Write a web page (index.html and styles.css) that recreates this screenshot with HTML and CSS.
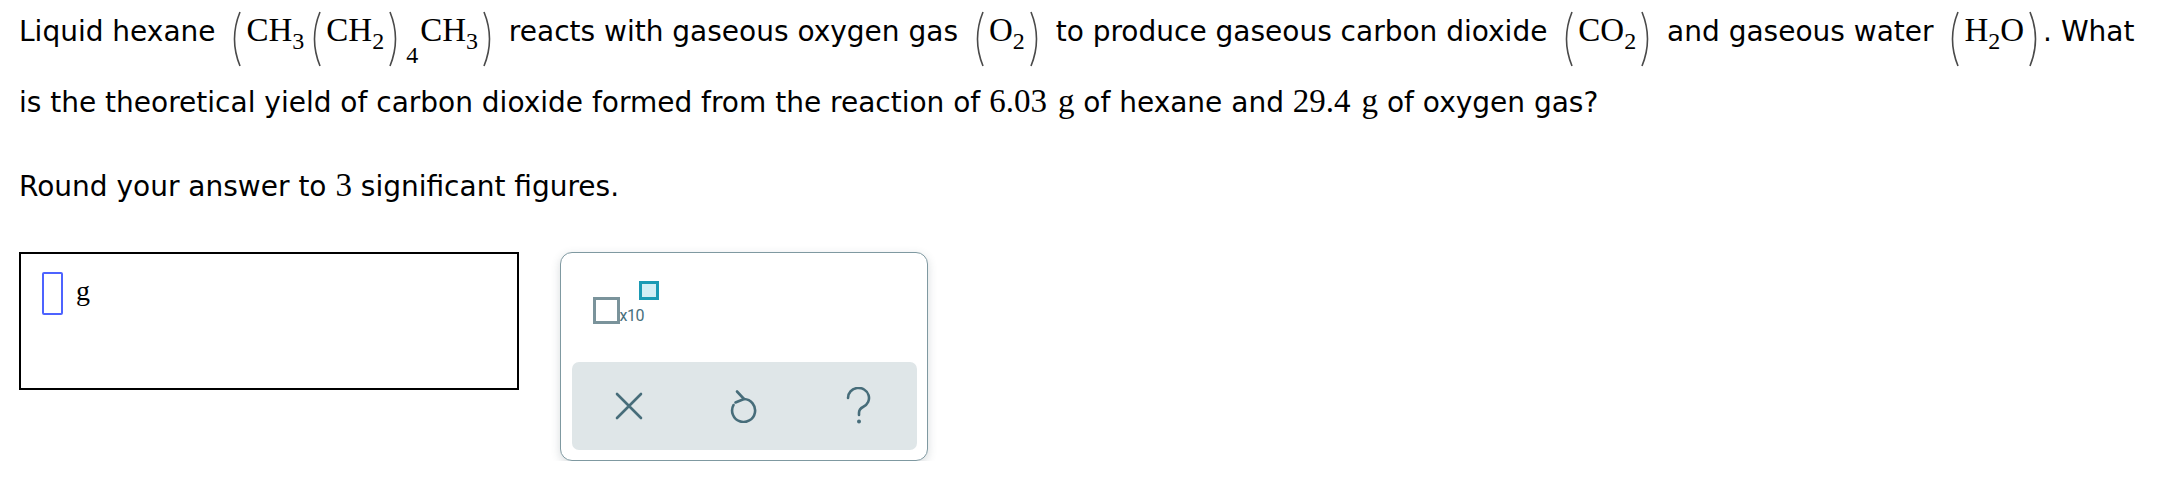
FILE: index.html
```html
<!DOCTYPE html>
<html>
<head>
<meta charset="utf-8">
<link rel="stylesheet" href="styles.css">
</head>
<body>
<div class="page">
  <p class="question">Liquid hexane <span class="math"><svg class="paren" width="16" height="56" viewBox="0 0 16 56"><path d="M13 1 Q2 28 13 55"/></svg>CH<sub>3</sub><svg class="paren" width="16" height="56" viewBox="0 0 16 56"><path d="M13 1 Q2 28 13 55"/></svg>CH<sub>2</sub><svg class="paren" width="16" height="56" viewBox="0 0 16 56"><path d="M3 1 Q14 28 3 55"/></svg><sub class="low">4</sub>CH<sub>3</sub><svg class="paren" width="16" height="56" viewBox="0 0 16 56"><path d="M3 1 Q14 28 3 55"/></svg></span> reacts with gaseous oxygen gas <span class="math"><svg class="paren" width="16" height="56" viewBox="0 0 16 56"><path d="M13 1 Q2 28 13 55"/></svg>O<sub>2</sub><svg class="paren" width="16" height="56" viewBox="0 0 16 56"><path d="M3 1 Q14 28 3 55"/></svg></span> to produce gaseous carbon dioxide <span class="math"><svg class="paren" width="16" height="56" viewBox="0 0 16 56"><path d="M13 1 Q2 28 13 55"/></svg>CO<sub>2</sub><svg class="paren" width="16" height="56" viewBox="0 0 16 56"><path d="M3 1 Q14 28 3 55"/></svg></span> and gaseous water <span class="math"><svg class="paren" width="16" height="56" viewBox="0 0 16 56"><path d="M13 1 Q2 28 13 55"/></svg>H<sub>2</sub>O<svg class="paren paren-end" width="16" height="56" viewBox="0 0 16 56"><path d="M3 1 Q14 28 3 55"/></svg></span>. What is the theoretical yield of carbon dioxide formed from the reaction of <span class="num">6.03<span class="unit-g">g</span></span> of hexane and <span class="num">29.4<span class="unit-g">g</span></span> of oxygen gas?</p>
  <p class="round">Round your answer to <span class="num">3</span> significant figures.</p>

  <div class="answer-row">
    <div class="answer-box">
      <span class="cursor"></span><span class="unit">g</span>
    </div>
    <div class="panel">
      <div class="panel-top">
        <div class="sci">
          <span class="sci-box"></span><span class="sci-text">x10</span><span class="sci-exp"></span>
        </div>
      </div>
      <div class="panel-bar">
        <span class="btn">
          <svg width="28" height="28" viewBox="0 0 28 28"><path d="M2 2 L26 26 M26 2 L2 26"/></svg>
        </span>
        <span class="btn">
          <svg width="28" height="34" viewBox="0 0 28 34"><path d="M14 10 A11.5 11.5 0 1 1 3.5 16"/><path d="M7 2.5 L14 10 L5.5 13.5"/></svg>
        </span>
        <span class="btn">
          <svg width="26" height="38" viewBox="0 0 26 38"><path d="M2 11 A10.5 10 0 1 1 17 20 Q13 22 13 26 L13 28"/><circle class="dot" cx="13" cy="34.5" r="2"/></svg>
        </span>
      </div>
    </div>
  </div>
</div>
</body>
</html>
```

FILE: styles.css
```css
html, body {
  margin: 0;
  padding: 0;
  background: #ffffff;
}

.page {
  padding: 0 4px 0 19px;
  font-family: "DejaVu Sans", Verdana, sans-serif;
  font-size: 28px;
  color: #000;
}

.question {
  margin: -4px 0 0 0;
  line-height: 69px;
}

.math {
  font-family: "Liberation Serif", "Times New Roman", serif;
  font-size: 33px;
  white-space: nowrap;
}

.math sub {
  font-size: 24px;
  vertical-align: -8px;
  line-height: 0;
}

.math sub.low {
  font-size: 24px;
  vertical-align: -22px;
  margin-right: 2px;
}

.paren {
  vertical-align: -26px;
  margin: 0 3px;
}

.paren-end {
  margin-right: 0;
}

.paren path {
  fill: none;
  stroke: #4a4a4a;
  stroke-width: 1.6;
}

.num {
  font-family: "Liberation Serif", "Times New Roman", serif;
  font-size: 33px;
}

.unit-g {
  margin-left: 11px;
}

.round {
  margin: 28px 0 0 0;
  line-height: 40px;
}

.answer-row {
  display: flex;
  align-items: flex-start;
  gap: 41px;
  margin-top: 45px;
}

.answer-box {
  box-sizing: border-box;
  width: 500px;
  height: 138px;
  border: 2px solid #000;
  padding: 18px 0 0 21px;
  display: flex;
  align-items: flex-start;
}

.cursor {
  box-sizing: border-box;
  width: 21px;
  height: 43px;
  border: 2px solid #4d63ff;
  border-radius: 2px;
}

.unit {
  font-family: "Liberation Serif", "Times New Roman", serif;
  font-size: 28px;
  margin-left: 13px;
  margin-top: 3px;
}

.panel {
  box-sizing: border-box;
  width: 368px;
  height: 209px;
  border: 1.5px solid #7f99a1;
  border-radius: 12px;
  padding: 0 10.5px 10px;
  display: flex;
  flex-direction: column;
  box-shadow: 0 3px 10px rgba(60, 80, 90, 0.2);
  background: #fff;
}

.panel-top {
  height: 108.5px;
}

.sci {
  display: flex;
  align-items: flex-end;
  margin: 28px 0 0 21px;
}

.sci-box {
  box-sizing: border-box;
  width: 27px;
  height: 27px;
  border: 3px solid #7a939b;
  margin-bottom: 11px;
}

.sci-text {
  font-family: Roboto, "Open Sans", sans-serif;
  font-size: 16px;
  color: #48707c;
  line-height: 16px;
  margin-bottom: 11px;
  letter-spacing: -0.5px;
}

.sci-exp {
  box-sizing: border-box;
  width: 20px;
  height: 19px;
  border: 3px solid #1b9ab4;
  background: #d3eef5;
  margin-bottom: 35px;
  margin-left: -5px;
}

.panel-bar {
  height: 88px;
  background: #dfe6e8;
  border-radius: 7px;
  display: grid;
  grid-template-columns: 1fr 1fr 1fr;
  align-items: center;
  justify-items: center;
}

.btn {
  display: flex;
  align-items: center;
  justify-content: center;
}

.btn svg path {
  fill: none;
  stroke: #476d7a;
  stroke-width: 2.6;
  stroke-linecap: round;
  stroke-linejoin: round;
}

.btn svg .dot {
  fill: #476d7a;
}
```
